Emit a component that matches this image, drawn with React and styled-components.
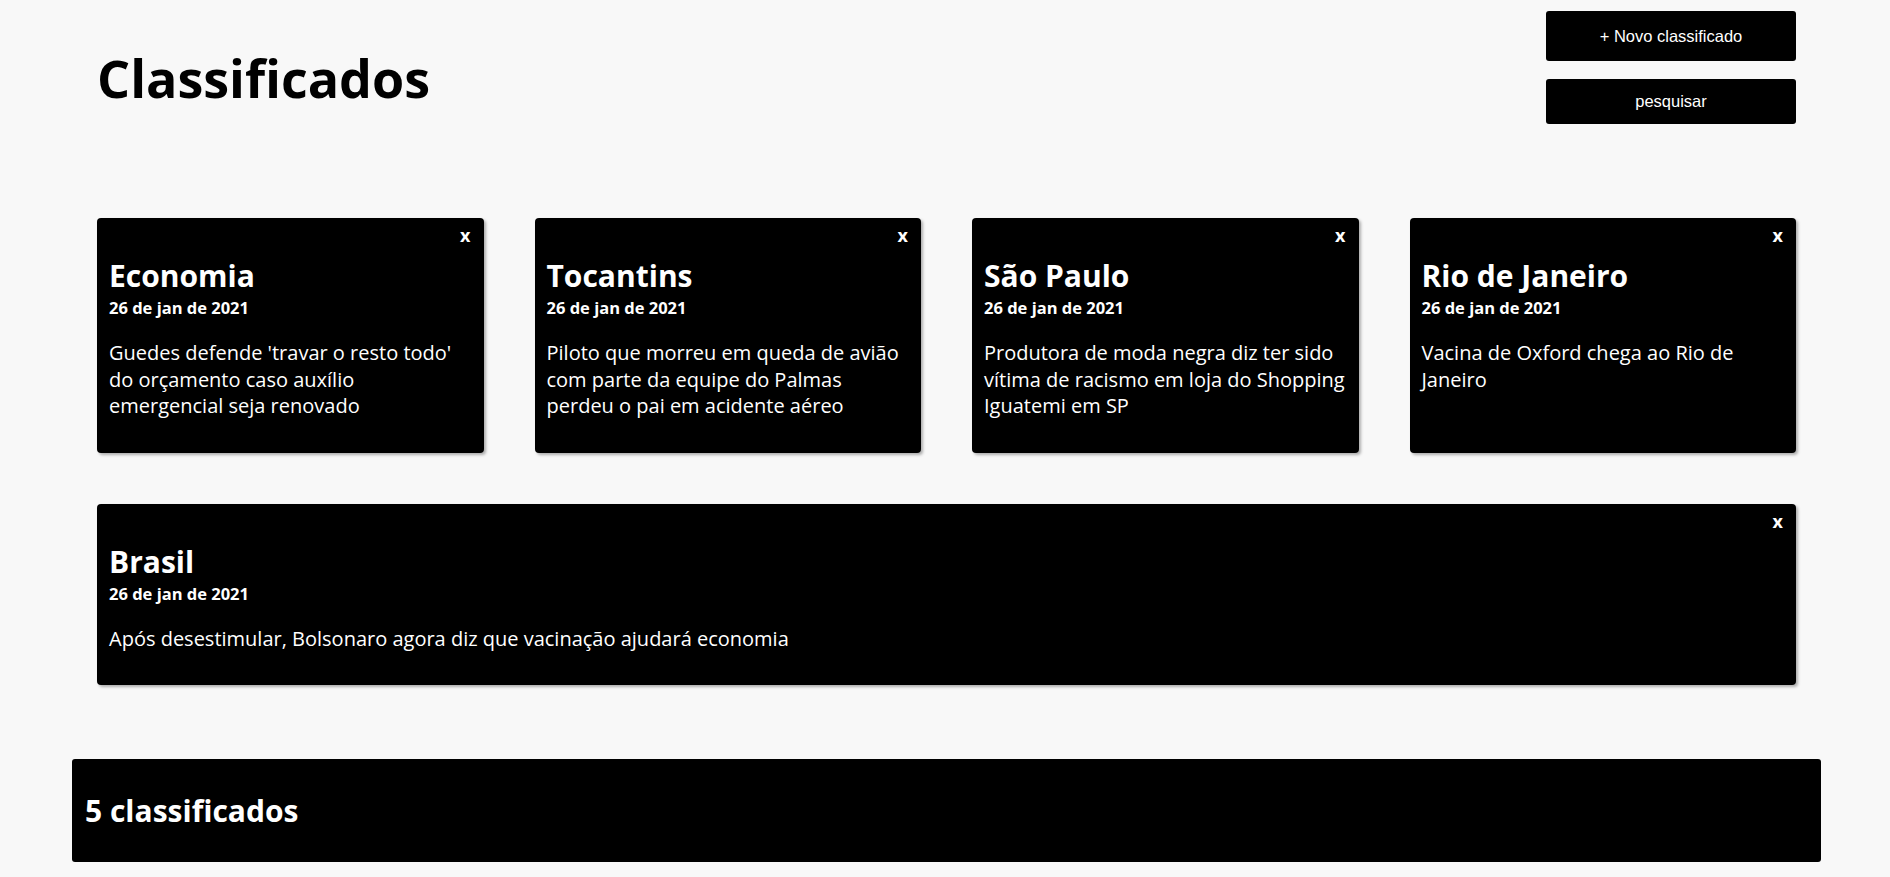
import React from "react";
import styled, { createGlobalStyle } from "styled-components";

const GlobalStyle = createGlobalStyle`
  body {
    margin: 0;
    background: #f8f8f8;
    font-family: "Open Sans", "Liberation Sans", sans-serif;
  }
`;

const StyledPage = styled.div`
  padding-top: 11px;
  padding-bottom: 16px;
`;

const StyledHeader = styled.header`
  display: flex;
  justify-content: space-between;
  align-items: flex-start;
  margin: 0 94px 0 97px;
`;

const StyledTitle = styled.h1`
  margin: 31px 0 0;
  font-family: "Open Sans", sans-serif;
  font-weight: 700;
  font-size: 52px;
  color: #000;
`;

const StyledActions = styled.div`
  display: flex;
  flex-direction: column;
  gap: 18px;
  width: 250px;
`;

const StyledButton = styled.button`
  height: ${(props) => props.height}px;
  border: none;
  border-radius: 3px;
  background: #000;
  color: #fff;
  font-family: "Liberation Sans", Arial, sans-serif;
  font-size: 16.5px;
  cursor: pointer;
`;

const StyledGrid = styled.section`
  display: grid;
  grid-template-columns: repeat(4, 1fr);
  gap: 51px;
  margin: 94px 94px 0 97px;
`;

const StyledCard = styled.article`
  display: flex;
  flex-direction: column;
  grid-column: ${(props) => (props.wide ? "1 / -1" : "auto")};
  background: #000;
  color: #fff;
  border-radius: 4px;
  padding: 8px 12px 12px;
  box-shadow: 2px 2px 3px rgba(0, 0, 0, 0.3);
`;

const StyledCloseRow = styled.div`
  display: flex;
  justify-content: flex-end;
  height: 29px;
`;

const StyledClose = styled.span`
  font-size: 18px;
  font-weight: 700;
  line-height: 18px;
  margin-right: 1px;
  cursor: pointer;
`;

const StyledCardTitle = styled.h2`
  margin: 0;
  font-size: 30px;
  font-weight: 700;
  line-height: normal;
`;

const StyledDate = styled.h3`
  margin: 0;
  font-size: 16.5px;
  font-weight: 700;
  line-height: normal;
`;

const StyledText = styled.p`
  margin: 21px 0;
  font-size: 20px;
  line-height: 26.5px;
`;

const StyledFooter = styled.footer`
  margin: 74px 69px 0 72px;
  padding: 31px 13px;
  background: #000;
  color: #fff;
  border-radius: 3px;
`;

const StyledCount = styled.h2`
  margin: 0;
  font-size: 30px;
  font-weight: 700;
  line-height: normal;
`;

const classificados = [
  {
    title: "Economia",
    text: "Guedes defende 'travar o resto todo' do orçamento caso auxílio emergencial seja renovado",
  },
  {
    title: "Tocantins",
    text: "Piloto que morreu em queda de avião com parte da equipe do Palmas perdeu o pai em acidente aéreo",
  },
  {
    title: "São Paulo",
    text: "Produtora de moda negra diz ter sido vítima de racismo em loja do Shopping Iguatemi em SP",
  },
  {
    title: "Rio de Janeiro",
    text: "Vacina de Oxford chega ao Rio de Janeiro",
  },
  {
    title: "Brasil",
    text: "Após desestimular, Bolsonaro agora diz que vacinação ajudará economia",
    wide: true,
  },
];

function App() {
  return (
    <StyledPage>
      <GlobalStyle />
      <StyledHeader>
        <StyledTitle>Classificados</StyledTitle>
        <StyledActions>
          <StyledButton height={50}>+ Novo classificado</StyledButton>
          <StyledButton height={45}>pesquisar</StyledButton>
        </StyledActions>
      </StyledHeader>
      <StyledGrid>
        {classificados.map((item) => (
          <StyledCard key={item.title} wide={item.wide}>
            <StyledCloseRow>
              <StyledClose>x</StyledClose>
            </StyledCloseRow>
            <StyledCardTitle>{item.title}</StyledCardTitle>
            <StyledDate>26 de jan de 2021</StyledDate>
            <StyledText>{item.text}</StyledText>
          </StyledCard>
        ))}
      </StyledGrid>
      <StyledFooter>
        <StyledCount>{classificados.length} classificados</StyledCount>
      </StyledFooter>
    </StyledPage>
  );
}

export default App;
